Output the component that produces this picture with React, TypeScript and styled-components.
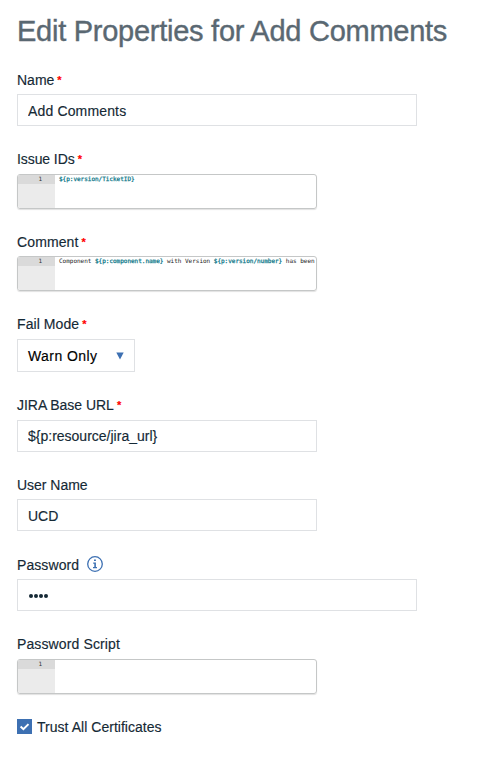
import React from "react";
import styled, { createGlobalStyle } from "styled-components";

const GlobalStyle = createGlobalStyle`
  * { box-sizing: border-box; }
  body {
    margin: 0;
    background: #fff;
    color: #152935;
    font-family: "Liberation Sans", Arial, sans-serif;
    font-size: 14px;
  }
`;

const Page = styled.main`
  display: flex;
  flex-direction: column;
  align-items: flex-start;
  width: 483px;
  min-height: 759px;
  padding: 14px 17px 0;
`;

const Title = styled.h1`
  margin: 0 0 22px;
  height: 34px;
  line-height: 34px;
  font-size: 29px;
  font-weight: 400;
  letter-spacing: -0.26px;
  color: #5a6872;
  -webkit-text-stroke: 0.4px #5a6872;
  white-space: nowrap;
`;

const Field = styled.div<{ $gap?: number }>`
  display: flex;
  flex-direction: column;
  align-items: flex-start;
  margin-bottom: ${(p) => p.$gap ?? 23}px;
`;

const Label = styled.label<{ $height: number; $tracking?: number }>`
  display: flex;
  height: ${(p) => p.$height}px;
  line-height: 20px;
  letter-spacing: ${(p) => p.$tracking ?? 0.08}px;
  -webkit-text-stroke: 0.15px currentColor;
  white-space: nowrap;
`;

const Required = styled.span`
  margin-left: 3px;
  color: #f00;
  font-size: 11px;
  font-weight: 700;
  letter-spacing: 0;
`;

const Input = styled.input<{ $width: number; $tracking?: number; $top?: number }>`
  width: ${(p) => p.$width}px;
  height: 32px;
  padding: ${(p) => p.$top ?? 2}px 10px 0;
  border: 1px solid #dfe1e4;
  border-radius: 0;
  outline: 0;
  background: #fff;
  color: #152935;
  font: 14px "Liberation Sans", Arial, sans-serif;
  letter-spacing: ${(p) => p.$tracking ?? 0}px;
  -webkit-text-stroke: 0.15px currentColor;
`;

const PasswordBox = styled.div`
  display: flex;
  align-items: center;
  gap: 1px;
  width: 400px;
  height: 32px;
  padding: 2px 11px 0;
  border: 1px solid #dfe1e4;
`;

const Dot = styled.span`
  width: 4px;
  height: 4px;
  border-radius: 50%;
  background: #152935;
`;

const Select = styled.div`
  display: flex;
  align-items: center;
  justify-content: space-between;
  width: 118px;
  height: 33px;
  padding: 1px 10px 0;
  border: 1px solid #dfe1e4;
  color: #000;
  letter-spacing: 0.42px;
  -webkit-text-stroke: 0.15px currentColor;
  svg { margin-top: -1px; }
`;

const Editor = styled.div`
  display: flex;
  width: 300px;
  height: 35px;
  overflow: hidden;
  border: 1px solid #c5c7c7;
  border-radius: 3px;
  box-shadow: 0 1px 1px rgba(0, 0, 0, 0.12);
  font: 6px/7px "DejaVu Sans Mono", monospace;
`;

const Gutter = styled.div`
  width: 37px;
  flex: none;
  background: #ebebeb;
  color: #333;
`;

const LineNumber = styled.div`
  height: 9px;
  padding-right: 13px;
  background: #dadada;
  text-align: right;
`;

const Code = styled.div`
  padding-left: 4px;
  letter-spacing: -0.013px;
  white-space: pre;
  color: #222;
`;

const Variable = styled.span`
  color: #117a8b;
  -webkit-text-stroke: 0.25px #117a8b;
`;

const Info = styled.svg`
  margin: 1px 0 0 8px;
`;

const CheckRow = styled.label`
  display: flex;
  align-items: flex-start;
  gap: 5px;
  height: 20px;
  line-height: 20px;
  letter-spacing: 0.03px;
  -webkit-text-stroke: 0.15px currentColor;
  white-space: nowrap;
`;

const CheckBox = styled.span`
  display: flex;
  width: 15px;
  height: 15px;
  margin-top: 2px;
  background: #3d70b2;
`;

const CodeEditor = ({ children }: { children?: React.ReactNode }) => (
  <Editor>
    <Gutter>
      <LineNumber>1</LineNumber>
    </Gutter>
    <Code>{children}</Code>
  </Editor>
);

export default function App() {
  return (
    <>
      <GlobalStyle />
      <Page>
        <Title>Edit Properties for Add Comments</Title>
        <Field>
          <Label $height={24} $tracking={0}>Name<Required>*</Required></Label>
          <Input $width={400} $tracking={0.15} defaultValue="Add Comments" />
        </Field>
        <Field>
          <Label $height={25} $tracking={-0.08}>Issue IDs<Required>*</Required></Label>
          <CodeEditor><Variable>{"${p:version/TicketID}"}</Variable></CodeEditor>
        </Field>
        <Field>
          <Label $height={24} $tracking={0.12}>Comment<Required>*</Required></Label>
          <CodeEditor>
            Component <Variable>{"${p:component.name}"}</Variable> with Version{" "}
            <Variable>{"${p:version/number}"}</Variable> has been
          </CodeEditor>
        </Field>
        <Field>
          <Label $height={25}>Fail Mode<Required>*</Required></Label>
          <Select>
            Warn Only
            <svg width="8" height="8" viewBox="0 0 8 8">
              <path d="M0.3 0.4h7.4L4 7.6z" fill="#3d70b2" />
            </svg>
          </Select>
        </Field>
        <Field>
          <Label $height={25} $tracking={-0.03}>JIRA Base URL<Required>*</Required></Label>
          <Input $width={300} $top={0} defaultValue={"${p:resource/jira_url}"} />
        </Field>
        <Field $gap={24}>
          <Label $height={24} $tracking={-0.02}>User Name</Label>
          <Input $width={300} defaultValue="UCD" />
        </Field>
        <Field>
          <Label $height={24}>
            Password
            <Info width="16" height="16" viewBox="0 0 16 16">
              <circle cx="8" cy="8" r="7.3" fill="none" stroke="#3d70b2" strokeWidth="1.3" />
              <path d="M7 3.4h1.9v1.7H7zM6.2 6.6h2.7v4.4h1.1v1.2H6V11h1.3V7.8H6.2z" fill="#3d70b2" />
            </Info>
          </Label>
          <PasswordBox><Dot /><Dot /><Dot /><Dot /></PasswordBox>
        </Field>
        <Field>
          <Label $height={25} $tracking={0.12}>Password Script</Label>
          <CodeEditor />
        </Field>
        <CheckRow>
          <CheckBox>
            <svg width="15" height="15" viewBox="0 0 15 15">
              <path d="M3.6 7.5l2.8 2.7 5.1-5.1" fill="none" stroke="#fff" strokeWidth="2" />
            </svg>
          </CheckBox>
          Trust All Certificates
        </CheckRow>
      </Page>
    </>
  );
}
